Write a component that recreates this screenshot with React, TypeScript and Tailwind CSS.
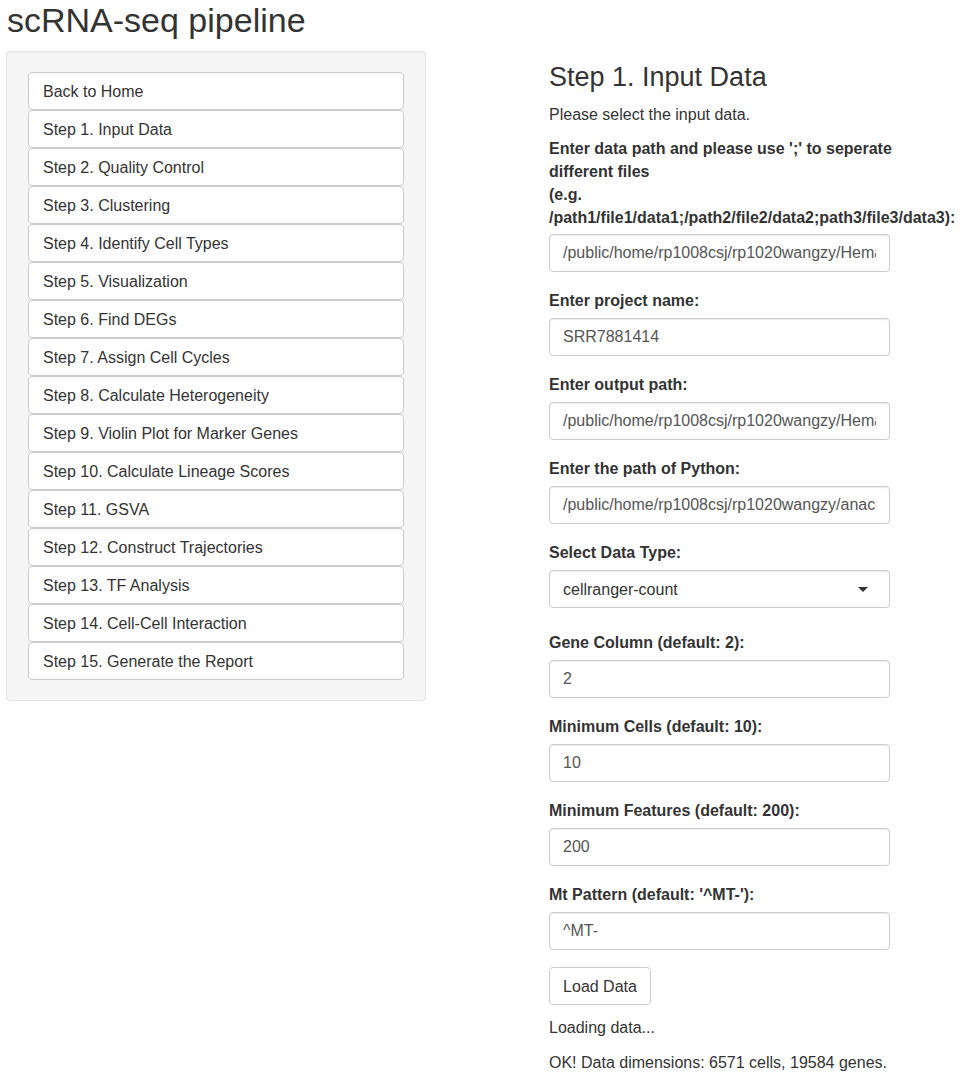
import React from "react";

const steps = [
  "Back to Home",
  "Step 1. Input Data",
  "Step 2. Quality Control",
  "Step 3. Clustering",
  "Step 4. Identify Cell Types",
  "Step 5. Visualization",
  "Step 6. Find DEGs",
  "Step 7. Assign Cell Cycles",
  "Step 8. Calculate Heterogeneity",
  "Step 9. Violin Plot for Marker Genes",
  "Step 10. Calculate Lineage Scores",
  "Step 11. GSVA",
  "Step 12. Construct Trajectories",
  "Step 13. TF Analysis",
  "Step 14. Cell-Cell Interaction",
  "Step 15. Generate the Report",
];

function TextInput({ value }: { value: string }) {
  return (
    <input
      readOnly
      defaultValue={value}
      className="block h-[38px] w-[341px] rounded-[4px] border border-[#cccccc] bg-white px-[13px] text-[16px] text-[#555555] shadow-[inset_0_1px_1px_rgba(0,0,0,0.075)] outline-none"
      style={{ fontFamily: '"Liberation Sans", Arial, sans-serif' }}
    />
  );
}

function Label({ children }: { children: React.ReactNode }) {
  return <div className="mb-[6px] text-[16px] font-bold leading-[23px] text-[#333333]">{children}</div>;
}

function Field({ label, value }: { label: React.ReactNode; value: string }) {
  return (
    <div className="mb-[17px]">
      <Label>{label}</Label>
      <TextInput value={value} />
    </div>
  );
}

export default function App() {
  return (
    <div
      className="min-h-[1080px] w-[962px] bg-white text-[16px] leading-[23px] text-[#333333]"
      style={{ fontFamily: '"Liberation Sans", Arial, Helvetica, sans-serif' }}
    >
      <div className="ml-[7px] mb-[12px] pt-[2px] text-[34px] leading-[37px]">scRNA-seq pipeline</div>
      <div className="flex items-start">
        <div className="ml-[6px] w-[420px] rounded-[4px] border border-[#e3e3e3] bg-[#f5f5f5] px-[21px] pt-[20px] pb-[20px] shadow-[inset_0_1px_1px_rgba(0,0,0,0.05)]">
          <div className="flex flex-col">
            {steps.map((s) => (
              <button
                key={s}
                className="h-[38px] w-[376px] rounded-[4px] border border-[#cccccc] bg-white px-[14px] text-left text-[16px] leading-[23px] text-[#333333]"
                style={{ fontFamily: '"Liberation Sans", Arial, sans-serif' }}
              >
                {s}
              </button>
            ))}
          </div>
        </div>
        <div className="ml-[123px] flex-1">
          <div className="mt-[11px] mb-[11px] text-[27px] leading-[30px]">Step 1. Input Data</div>
          <p className="mb-[11px]">Please select the input data.</p>
          <div className="mb-[17px]">
            <div className="mb-[5px] text-[16px] font-bold leading-[23px] text-[#333333] whitespace-nowrap">
              <div>Enter data path and please use ';' to seperate</div>
              <div>different files</div>
              <div>(e.g.</div>
              <div>/path1/file1/data1;/path2/file2/data2;path3/file3/data3):</div>
            </div>
            <TextInput value="/public/home/rp1008csj/rp1020wangzy/Hematopoiesis/data" />
          </div>
          <Field label="Enter project name:" value="SRR7881414" />
          <Field label="Enter output path:" value="/public/home/rp1008csj/rp1020wangzy/Hematopoiesis/output" />
          <Field label="Enter the path of Python:" value="/public/home/rp1008csj/rp1020wangzy/anaconda3/bin/python" />
          <div className="mb-[23px]">
            <Label>Select Data Type:</Label>
            <div className="flex h-[38px] w-[341px] items-center justify-between rounded-[4px] border border-[#cccccc] bg-white pl-[13px] pr-[21px] shadow-[inset_0_1px_1px_rgba(0,0,0,0.075)]">
              <span className="text-[#333333]">cellranger-count</span>
              <svg width="10" height="5" viewBox="0 0 10 5">
                <path d="M0 0 L10 0 L5 5 Z" fill="#333333" />
              </svg>
            </div>
          </div>
          <Field label="Gene Column (default: 2):" value="2" />
          <Field label="Minimum Cells (default: 10):" value="10" />
          <Field label="Minimum Features (default: 200):" value="200" />
          <Field label="Mt Pattern (default: '^MT-'):" value="^MT-" />
          <button
            className="h-[38px] w-[102px] rounded-[4px] border border-[#cccccc] bg-white text-center text-[16px] text-[#333333]"
            style={{ fontFamily: '"Liberation Sans", Arial, sans-serif' }}
          >
            Load Data
          </button>
          <div className="mt-[11px]">Loading data...</div>
          <div className="mt-[12px]">OK! Data dimensions: 6571 cells, 19584 genes.</div>
        </div>
      </div>
    </div>
  );
}
